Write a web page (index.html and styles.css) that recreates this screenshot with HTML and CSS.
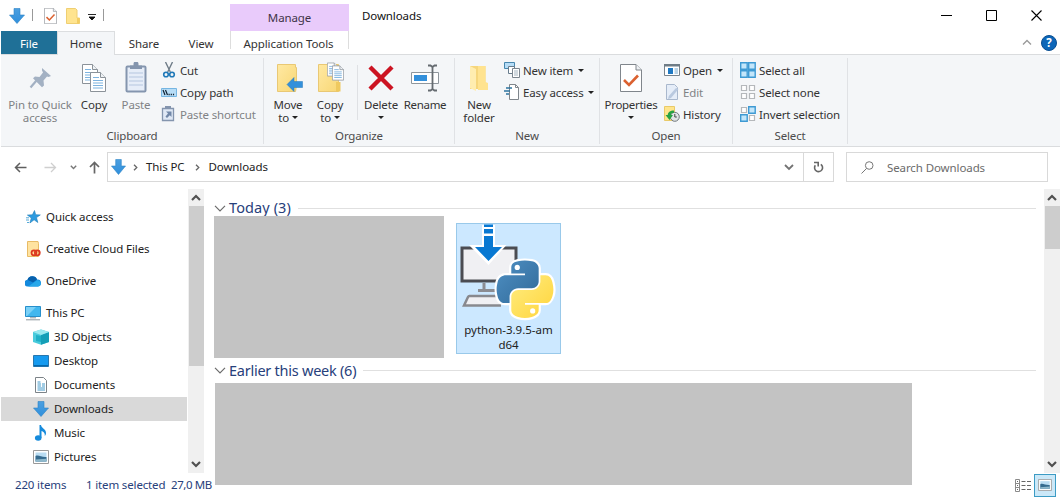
FILE: index.html
```html
<!DOCTYPE html>
<html lang="en">
<head>
<meta charset="utf-8">
<title>Downloads</title>
<link rel="stylesheet" href="styles.css">
</head>
<body>
<svg class="defs" width="0" height="0">
  <defs>
    <linearGradient id="gBlue" x1="0" y1="0" x2="0" y2="1"><stop offset="0" stop-color="#4b9fe0"/><stop offset="1" stop-color="#2f8fdc"/></linearGradient>
    <linearGradient id="gFolder" x1="0" y1="0" x2="1" y2="1"><stop offset="0" stop-color="#ffe9a3"/><stop offset="1" stop-color="#f8d775"/></linearGradient>
    <linearGradient id="gPyB" x1="0" y1="0" x2="1" y2="1"><stop offset="0" stop-color="#4f90c4"/><stop offset="1" stop-color="#306998"/></linearGradient>
    <linearGradient id="gPyY" x1="0" y1="0" x2="1" y2="1"><stop offset="0.2" stop-color="#ffe873"/><stop offset="1" stop-color="#ffd43b"/></linearGradient>
    <symbol id="down" viewBox="0 0 16 16"><path d="M5 .5h6v6.500h4.500L8 15.500.5 7H5z" fill="url(#gBlue)" stroke="#2b83c6" stroke-width=".6"/></symbol>
    <symbol id="sheet" viewBox="0 0 16 20"><path d="M.5.5h10l5 5v14H.5z" fill="#fff" stroke="#8b9299"/><path d="M10.500.5v5h5" fill="#eef2f5" stroke="#8b9299"/><path d="M3 5.500h6M3 8.500h10M3 11h10M3 13.500h10M3 16h10" stroke="#7db3df" stroke-width="1.200"/></symbol>
    <symbol id="photo" viewBox="0 0 16 14"><path d="M.5.5h15v13H.5z" fill="#fff" stroke="#9a9a9a"/><path d="M2.500 2.500h11v9h-11z" fill="#b9dcf2"/><path d="M2.500 6c3-1.500 6 1.500 11 1v4.500h-11z" fill="#356b8f"/><path d="M2.500 9.500l11-.8v2.800h-11z" fill="#8fb9cc"/></symbol>
    <symbol id="up" viewBox="0 0 10 8"><path d="M1 6l4-4 4 4" fill="none" stroke="#505050" stroke-width="2.200"/></symbol>
    <symbol id="check" viewBox="0 0 22 28"><path d="M.5.5h15.500l5.500 5.500v21.500H.5z" fill="#fff" stroke="#80868c"/><path d="M16 .5V6h5.500" fill="#eef1f4" stroke="#80868c"/><path d="M4 16l5 5 9-9.500" fill="none" stroke="#db6130" stroke-width="2.600"/></symbol>
    <symbol id="chev" viewBox="0 0 12 7"><path d="M1 .8l5 5 5-5" fill="none" stroke="#6b6b6b" stroke-width="1.200"/></symbol>
  </defs>
</svg>
<div class="window">
  <header class="top">
    <div class="quickbar">
      <svg class="q-down" width="16" height="16"><use href="#down"/></svg>
      <i class="tick"></i>
      <svg class="q-check" width="13" height="16"><use href="#check"/></svg>
      <svg class="q-folder" width="14" height="16" viewBox="0 0 14 16"><path d="M.5.5h9l1.500 1.500v8h2.500v5.500H.5z" fill="#ffe48f" stroke="#efcf72"/><path d="M11 10h2.500v5.500H11z" fill="#f3cd62"/></svg>
      <svg class="q-more" width="8" height="7" viewBox="0 0 8 7"><path d="M0 .5h8M1 3h6L4 6z" stroke="#111" fill="#111" stroke-width=".9"/></svg>
      <i class="tick"></i>
    </div>
    <div class="manage">Manage</div>
    <div class="title">Downloads</div>
    <div class="controls">
      <svg width="11" height="11" viewBox="0 0 11 11"><path d="M0 5.500h11" stroke="#000"/></svg>
      <svg width="11" height="11" viewBox="0 0 11 11"><path d="M.5.5h10v10H.5z" fill="none" stroke="#000"/></svg>
      <svg width="11" height="11" viewBox="0 0 11 11"><path d="M.5.5l10 10M10.500.5l-10 10" stroke="#000" stroke-width="1.100"/></svg>
    </div>
  </header>
  <nav class="tabs">
    <div class="tab file">File</div>
    <div class="tab home">Home</div>
    <div class="tab share">Share</div>
    <div class="tab view">View</div>
    <div class="tab tools">Application Tools</div>
    <div class="tabs-end">
      <svg width="10" height="7" viewBox="0 0 10 7"><path d="M1 5.500l4-4 4 4" fill="none" stroke="#999" stroke-width="1.300"/></svg>
      <span class="help">?</span>
    </div>
  </nav>
  <section class="ribbon">
    <div class="group clipboard">
      <div class="tools-row">
        <div class="big w-pin off"><svg width="32" height="32" viewBox="0 0 32 32"><g transform="translate(-1 0)"><path d="M19 6l9 8-2.500 1-1.500-.5-3.500 4 .5 5-2 1.800-9-9 2-1.800 4.500.5 3.500-4.500-1-2z" fill="#a3b1c3"/><path d="M13.500 18.500l-6 7" stroke="#a3b1c3" stroke-width="2.200"/></g></svg><span>Pin to Quick<br>access</span></div>
        <div class="big w-copy"><svg width="26" height="32" viewBox="0 0 26 32"><use href="#sheet" x="1" y="2" width="16" height="20"/><use href="#sheet" x="9" y="10" width="16" height="20"/></svg><span>Copy</span></div>
        <div class="big w-paste off"><svg width="22" height="32" viewBox="0 0 22 32"><rect x="1.500" y="4.500" width="19" height="25" rx="1" fill="#e6edf8" stroke="#8495ae" stroke-width="2"/><path d="M5 7V3.500h3.500V2a2.500 2.500 0 015 0v1.500H17V7z" fill="#8495ae"/><path d="M4 11h14M4 15h14M4 19h14M4 23h14" stroke="#b5c6df"/></svg><span>Paste</span></div>
        <div class="smalls">
          <div class="small"><svg viewBox="0 0 16 16"><path d="M4.500 0l4.800 10M11.500 0L6.700 10" stroke="#6f7c88" stroke-width="1.400"/><circle cx="5" cy="12.500" r="2.300" fill="none" stroke="#2079b8" stroke-width="1.600"/><circle cx="11" cy="12.500" r="2.300" fill="none" stroke="#2079b8" stroke-width="1.600"/></svg><span>Cut</span></div>
          <div class="small"><svg viewBox="0 0 16 16"><path d="M.5 4.500h15v8H.5z" fill="#b7ddf7" stroke="#76b6e2"/><path d="M2 6l2 5M4.500 6l2 5" stroke="#123" stroke-width="1.200"/><path d="M7.500 10.500h1.200m1 0h1.200m1 0h1.200" stroke="#123" stroke-width="1.300"/></svg><span>Copy path</span></div>
          <div class="small off"><svg viewBox="0 0 16 16"><path d="M1.500 2.500h11v12h-11z" fill="#dfe8f5" stroke="#8495ae" stroke-width="1.300"/><path d="M4 0h6v3H4z" fill="#8495ae"/><path d="M5 5.500h5.500V11L8.800 9.300 6 12 4.500 10.500l2.500-3z" fill="#7187a8"/></svg><span>Paste shortcut</span></div>
        </div>
      </div>
      <div class="caption">Clipboard</div>
    </div>
    <div class="group organize">
      <div class="tools-row">
        <div class="big w-move"><svg width="30" height="32" viewBox="0 0 30 32"><path d="M4.500 2.500h18v3h1v18l-1 6h-18z" fill="url(#gFolder)" stroke="#e9c874"/><path d="M14 22.500l7-7v4h8.500v6H21v4z" fill="#3390db" stroke="#2277bb" stroke-width=".5"/></svg><span>Move<br>to <i class="dd"></i></span></div>
        <div class="big w-copyto"><svg width="30" height="32" viewBox="0 0 30 32"><path d="M3.500 2.500h20v27h-20z" fill="url(#gFolder)" stroke="#e9c874"/><path d="M21 20h4.500v9.500H21z" fill="#efc95f"/><use href="#sheet" x="12" y="0" width="11" height="15"/><use href="#sheet" x="17" y="3" width="12" height="16"/></svg><span>Copy<br>to <i class="dd"></i></span></div>
        <i class="bar"></i>
        <div class="big w-delete"><svg width="28" height="32" viewBox="0 0 28 32"><path d="M3 5l22 22M25 5L3 27" stroke="#cc1422" stroke-width="4.400"/></svg><span>Delete<br><i class="dd"></i></span></div>
        <div class="big w-rename"><svg width="30" height="32" viewBox="0 0 30 32"><path d="M1.500 10.500h27v11h-27z" fill="#fff" stroke="#8f969c"/><path d="M4 13h13v6H4z" fill="#3390db"/><path d="M18 3.500h2.500l2 1.500 2-1.500H27M18 28.500h2.500l2-1.500 2 1.500H27M22.500 4v24" fill="none" stroke="#656b70" stroke-width="1.800"/></svg><span>Rename</span></div>
      </div>
      <div class="caption">Organize</div>
    </div>
    <div class="group new">
      <div class="tools-row">
        <div class="big w-folder"><svg width="22" height="32" viewBox="0 0 22 32"><path d="M2 4h15.500v23H2z" fill="#f6d67c"/><path d="M10 4h7.500v16l2.500 1v7H10z" fill="#ffe38f"/><path d="M2 4l6 3v22l-6-3z" fill="#ffedb0"/></svg><span>New<br>folder</span></div>
        <div class="smalls">
          <div class="small"><svg viewBox="0 0 16 16"><path d="M.5.5h10v6H.5z" fill="#b7ddf7" stroke="#4787ae"/><path d="M4.500 4.500h6v7h-6z" fill="#fff" stroke="#687c8c"/><path d="M8.500 6.500h7v9h-7z" fill="#fff" stroke="#7c858e"/><path d="M10 9h4M10 11h4M10 13h4" stroke="#a5b4c0"/></svg><span>New item <i class="dd"></i></span></div>
          <div class="small"><svg viewBox="0 0 16 16"><path d="M5.500.5h6l3 3v12h-9z" fill="#fff" stroke="#80868c"/><path d="M11.500.5v3h3" fill="none" stroke="#80868c"/><path d="M2 4h6M0 7h6M2 10h3" stroke="#2d749f" stroke-width="1.500"/></svg><span>Easy access <i class="dd"></i></span></div>
        </div>
      </div>
      <div class="caption">New</div>
    </div>
    <div class="group open">
      <div class="tools-row">
        <div class="big w-props"><svg width="22" height="32" viewBox="0 0 22 32"><use href="#check" y="2" width="22" height="28"/></svg><span>Properties<br><i class="dd"></i></span></div>
        <div class="smalls">
          <div class="small"><svg viewBox="0 0 16 16"><path d="M.5 2.500h15v11H.5z" fill="#fff" stroke="#78838c"/><path d="M0 2h16v2.500H0z" fill="#6f7c86"/><path d="M4 6h5v6H4z" fill="#2079c2"/><path d="M10.500 7h3.500M10.500 9h3.500M10.500 11h3.500" stroke="#77a8cc"/></svg><span>Open <i class="dd"></i></span></div>
          <div class="small off"><svg viewBox="0 0 16 16"><path d="M2.500.5h8l3 3v12h-11z" fill="#e5edf8" stroke="#a9b8cd"/><path d="M14.500 5L7 14l-3 1 .8-3L12 4z" fill="#b9c9df"/></svg><span>Edit</span></div>
          <div class="small"><svg viewBox="0 0 16 16"><path d="M.5.5h10v14H.5z" fill="#ffe58c" stroke="#e9ca68"/><circle cx="10.800" cy="10.800" r="4.500" fill="#dfe3e5" stroke="#72797e"/><path d="M10.800 8v3h2" fill="none" stroke="#444"/><path d="M10 4.500C6 4.500 3.800 6.500 3.800 9H1.500l4 5 3.500-5H7c0-1.500 1-2.200 3-2.200z" fill="#27a243"/></svg><span>History</span></div>
        </div>
      </div>
      <div class="caption">Open</div>
    </div>
    <div class="group select">
      <div class="tools-row">
        <div class="smalls">
          <div class="small"><svg viewBox="0 0 16 16"><path d="M.7.7h6.500v6.500H.7zM8.700.7h6.500v6.500H8.700zM.7 8.700h6.500v6.500H.7zM8.700 8.700h6.500v6.500H8.700z" fill="#c3e6fa" stroke="#3e9ad3" stroke-width="1.400"/></svg><span>Select all</span></div>
          <div class="small"><svg viewBox="0 0 16 16"><path d="M1.500 1.500h5v5h-5zM9.500 1.500h5v5h-5zM1.500 9.500h5v5h-5zM9.500 9.500h5v5h-5z" fill="#fff" stroke="#b5b8bb" stroke-width="1.200"/></svg><span>Select none</span></div>
          <div class="small"><svg viewBox="0 0 16 16"><path d="M1.500 1.500h5v5h-5zM9.500 9.500h5v5h-5z" fill="#fff" stroke="#b5b8bb" stroke-width="1.200"/><path d="M8.700.7h6.500v6.500H8.700zM.7 8.700h6.500v6.500H.7z" fill="#c3e6fa" stroke="#3e9ad3" stroke-width="1.400"/></svg><span>Invert selection</span></div>
        </div>
      </div>
      <div class="caption">Select</div>
    </div>
  </section>
  <section class="address">
    <div class="arrows">
      <svg width="13" height="11" viewBox="0 0 13 11"><path d="M12.500 5.500H1.500M6 1L1.500 5.500 6 10" fill="none" stroke="#5f5f5f" stroke-width="1.500"/></svg>
      <svg width="13" height="11" viewBox="0 0 13 11"><path d="M.5 5.500h11M7 1l4.500 4.500L7 10" fill="none" stroke="#cfcfcf" stroke-width="1.300"/></svg>
      <svg width="7" height="5" viewBox="0 0 7 5"><path d="M.8.8l2.700 2.700L6.200.8" fill="none" stroke="#777" stroke-width="1.400"/></svg>
      <svg width="11" height="13" viewBox="0 0 11 13"><path d="M5.500 12.500v-11M1 6l4.500-4.500L10 6" fill="none" stroke="#666" stroke-width="1.700"/></svg>
    </div>
    <div class="path">
      <svg width="15" height="17" viewBox="0 0 16 17" preserveAspectRatio="none"><use href="#down" width="16" height="16"/></svg>
      <svg class="gt" width="5" height="7" viewBox="0 0 5 7"><path d="M1 .7l2.800 2.800L1 6.300" fill="none" stroke="#666" stroke-width="1.300"/></svg>
      <span class="crumb">This PC</span>
      <svg class="gt2" width="5" height="7" viewBox="0 0 5 7"><path d="M1 .7l2.800 2.800L1 6.300" fill="none" stroke="#666" stroke-width="1.300"/></svg>
      <span class="crumb">Downloads</span>
      <svg class="drop" width="10" height="7" viewBox="0 0 10 7"><path d="M1 1l4 4 4-4" fill="none" stroke="#737373" stroke-width="1.800"/></svg>
      <div class="refresh"><svg width="11" height="12" viewBox="0 0 11 12"><path d="M7.800 3.300A4 4 0 112.300 4.300" fill="none" stroke="#666" stroke-width="1.600"/><path d="M1 1.500h4.200v4" fill="none" stroke="#666" stroke-width="1.600"/></svg></div>
    </div>
    <div class="search"><svg width="13" height="13" viewBox="0 0 13 13"><circle cx="8.200" cy="4.500" r="3.800" fill="none" stroke="#777"/><path d="M5.500 7.500L.5 12.500" stroke="#777"/></svg><span>Search Downloads</span></div>
  </section>
  <main class="panes">
    <aside class="tree">
      <div class="item gap"><svg viewBox="0 0 16 16"><path d="M9.500 1.500l1.200 4.200 4.600.2-3.800 2.700 1.300 4.900-3.700-2.700-4.200 3.200 1.400-5-3.900-2.900 5-.3z" fill="#2c9be0" stroke="#1e7db9" stroke-width=".6"/><path d="M1 8.800h3M1 11h3M2 13.500h2" stroke="#55a9d7"/></svg><span>Quick access</span></div>
      <div class="item gap"><svg viewBox="0 0 16 16"><path d="M2.500.5H13l.5 2v13h-11z" fill="#ffe3a0" stroke="#e8bb66"/><g fill="none" stroke="#dc3a20" stroke-width="1.800"><circle cx="9" cy="11.800" r="2.500"/><circle cx="12.300" cy="11.800" r="2.500"/></g></svg><span>Creative Cloud Files</span></div>
      <div class="item gap"><svg viewBox="0 0 16 16"><path d="M3.200 13.500a3.300 3.300 0 01-.7-6.700A5 5 0 0112 6.500a3.500 3.500 0 011 7z" fill="#1389dd"/><path d="M2.500 6.800A5 5 0 0112 6.500L8 9.500z" fill="#0760ac"/><path d="M3.200 13.500L12 7.300a3.400 3.400 0 013.700 4.200 3 3 0 01-2.700 2z" fill="#28a8ea"/></svg><span>OneDrive</span></div>
      <div class="item"><svg viewBox="0 0 16 16"><path d="M.5 1.500h15v10H.5z" fill="#42b7ef" stroke="#278fcb"/><path d="M1 2h10l-9 9H1z" fill="#7bd1f7"/><path d="M5 12.800h6M1 14.800h14" stroke="#8d989f"/></svg><span>This PC</span></div>
      <div class="item sub"><svg viewBox="0 0 16 16"><path d="M0 3l8-2.500L16 3v10l-8 2.700L0 13z" fill="#49cbdc"/><path d="M8 6l8-3v10l-8 2.700z" fill="#159fb7"/><path d="M0 3l8-2.500L16 3 8 6z" fill="#9be9ef"/><path d="M3 6l5 1v6l-5-1z" fill="#1fb0c7"/></svg><span>3D Objects</span></div>
      <div class="item sub"><svg viewBox="0 0 16 16"><path d="M.5 2.500h15v11H.5z" fill="#169aef" stroke="#2877ae"/><path d="M1 12h14v1.200H1z" fill="#0568ab"/></svg><span>Desktop</span></div>
      <div class="item sub"><svg viewBox="0 0 16 16"><path d="M2.500.5h8l3 3v12h-11z" fill="#fff" stroke="#7c8388"/><path d="M4.500 5h3M4.500 7h3.500M9 7h3M4.500 9h3.500M9 9h3M4.500 11h7.500M4.500 13h7.500" stroke="#4599c9"/></svg><span>Documents</span></div>
      <div class="item sub picked"><svg viewBox="0 0 16 16"><use href="#down" width="16" height="16"/></svg><span>Downloads</span></div>
      <div class="item sub"><svg viewBox="0 0 16 16"><ellipse cx="5.200" cy="13" rx="3.300" ry="2.700" fill="#168bdc"/><path d="M6.500 13V0H8c.5 3.500 5.500 4 5 8.500-.3 1.500-.8 2-1.300 2.500.7-3-1.700-4.500-3.200-5V13z" fill="#168bdc"/></svg><span>Music</span></div>
      <div class="item sub"><svg viewBox="0 0 16 16"><use href="#photo" y="1" width="16" height="14"/></svg><span>Pictures</span></div>
    </aside>
    <div class="scroll left">
      <svg width="10" height="8"><use href="#up"/></svg><div class="thumb"></div><svg class="flip" width="10" height="8"><use href="#up"/></svg>
    </div>
    <div class="files">
      <div class="heading"><svg width="12" height="7"><use href="#chev"/></svg><span class="h-today">Today (3)</span><hr></div>
      <div class="row">
        <div class="blank one"></div>
        <div class="tile">
          <svg width="103" height="98" viewBox="0 0 103 98">
            <path d="M5 24h54v33h-54z" fill="#f0f0f3" stroke="#4b4c52" stroke-width="3"/>
            <path d="M27 59v7M21 66.500h20" stroke="#8b8c92" stroke-width="3"/>
            <path d="M44 72H12.500a2 2 0 00-1.500 1l-4 8.500H44" fill="#f0f0f3" stroke="#88898e" stroke-width="2.500"/>
            <path d="M25 1h13v20h11.500L31.500 41 12 21h13z" fill="#fff"/>
            <path d="M27 .5h9V3h-9zM27 5h9v4.500h-9zM27 12h9v11h9L31.500 37 18 23h9z" fill="#0878d2"/>
            <g transform="translate(32.500 35.500) scale(.555)">
              <g fill="#fff" stroke="#fff" stroke-width="8" stroke-linejoin="round">
                <path d="M63.391 1.988c-4.222.02-8.252.379-11.800 1.007-10.450 1.846-12.346 5.710-12.346 12.837v9.411h24.693v3.137H29.977c-7.176 0-13.460 4.313-15.426 12.521-2.268 9.405-2.368 15.275 0 25.096 1.755 7.311 5.947 12.519 13.124 12.519h8.491V67.234c0-8.151 7.051-15.340 15.426-15.340h24.665c6.866 0 12.346-5.654 12.346-12.548V15.833c0-6.693-5.646-11.720-12.346-12.837-4.244-.706-8.645-1.027-12.866-1.008z"/>
                <path d="M91.682 28.380v10.966c0 8.500-7.208 15.655-15.426 15.655H51.591c-6.756 0-12.346 5.783-12.346 12.549v23.515c0 6.691 5.818 10.628 12.346 12.547 7.816 2.297 15.312 2.713 24.665 0 6.216-1.801 12.346-5.423 12.346-12.547v-9.412H63.938v-3.138h37.012c7.176 0 9.852-5.005 12.348-12.519 2.578-7.735 2.467-15.174 0-25.096-1.774-7.145-5.161-12.521-12.348-12.521z"/>
              </g>
              <path fill="url(#gPyB)" d="M63.391 1.988c-4.222.02-8.252.379-11.800 1.007-10.450 1.846-12.346 5.710-12.346 12.837v9.411h24.693v3.137H29.977c-7.176 0-13.460 4.313-15.426 12.521-2.268 9.405-2.368 15.275 0 25.096 1.755 7.311 5.947 12.519 13.124 12.519h8.491V67.234c0-8.151 7.051-15.340 15.426-15.340h24.665c6.866 0 12.346-5.654 12.346-12.548V15.833c0-6.693-5.646-11.720-12.346-12.837-4.244-.706-8.645-1.027-12.866-1.008z"/>
              <path fill="url(#gPyY)" d="M91.682 28.380v10.966c0 8.500-7.208 15.655-15.426 15.655H51.591c-6.756 0-12.346 5.783-12.346 12.549v23.515c0 6.691 5.818 10.628 12.346 12.547 7.816 2.297 15.312 2.713 24.665 0 6.216-1.801 12.346-5.423 12.346-12.547v-9.412H63.938v-3.138h37.012c7.176 0 9.852-5.005 12.348-12.519 2.578-7.735 2.467-15.174 0-25.096-1.774-7.145-5.161-12.521-12.348-12.521z"/>
              <circle cx="50" cy="14.300" r="4.700" fill="#fff"/><circle cx="77.800" cy="92.600" r="4.700" fill="#fff"/>
            </g>
          </svg>
          <span>python-3.9.5-am<br>d64</span>
        </div>
      </div>
      <div class="heading second"><svg width="12" height="7"><use href="#chev"/></svg><span class="h-week">Earlier this week (6)</span><hr></div>
      <div class="blank two"></div>
    </div>
    <div class="scroll right">
      <svg width="10" height="8"><use href="#up"/></svg><div class="thumb"></div><svg class="flip" width="10" height="8"><use href="#up"/></svg>
    </div>
  </main>
  <footer class="status">
    <span class="count">220 items</span>
    <span class="sel">1 item selected</span>
    <span class="size">27,0 MB</span>
    <div class="modes">
      <svg width="16" height="13" viewBox="0 0 16 13"><path d="M.5.500h4v12h-4zM.5 4.500h4M.5 8.500h4" fill="#fff" stroke="#8a8a8a"/><path d="M2 2.500h1M2 6.500h1M2 10.500h1M6.500 2.500h4M6.500 6.500h4M6.500 10.500h4M12 2.500h4M12 6.500h4M12 10.500h4" stroke="#666"/></svg>
      <div class="mode-on"><svg width="14" height="12"><use href="#photo"/></svg></div>
    </div>
  </footer>
</div>
</body>
</html>
```

FILE: styles.css
```css
* { box-sizing: border-box; }
body { margin: 0; background: #fff; font-family: "Noto Sans", "Open Sans", sans-serif; font-size: 11.5px; letter-spacing: -0.1px; color: #262626; }
svg { display: block; flex: none; }
.defs { position: absolute; }
i { font-style: normal; }
.window { width: 1061px; height: 497px; overflow: hidden; display: flex; flex-direction: column; white-space: nowrap; }

.top { height: 31px; display: flex; flex: none; }
.quickbar { width: 230px; padding-left: 9px; display: flex; align-items: center; }
.quickbar svg { margin-top: 1px; }
.tick { width: 1px; height: 12px; background: #999; margin-bottom: 1px; }
.q-down { margin-right: 7px; }
.q-check { margin-left: 11px; }
.q-folder { margin-left: 9px; }
.q-more { margin: 0 7px 0 8px; }
.quickbar .q-more { margin-top: 3px; }
.manage { width: 119px; margin-top: 4px; background: #e9cbfb; display: flex; justify-content: center; align-items: center; color: #403448; }
.title { margin-left: 13px; line-height: 32px; color: #111; }
.controls { margin-left: auto; padding: 10px 19px 0 0; display: flex; gap: 34px; }

.tabs { height: 23px; display: flex; flex: none; padding-left: 1px; color: #333; }
.tab { display: flex; justify-content: center; align-items: center; padding-top: 1px; }
.file { width: 56px; background: #1f7097; color: #fff; }
.home { width: 58px; background: #f4f6f8; border: 1px solid #dcdee0; border-bottom: 0; height: 24px; z-index: 1; padding-top: 0; }
.share { width: 58px; }
.view { width: 56px; }
.tools { width: 119px; margin-left: 1px; height: 18px; border: solid #ddd; border-width: 0 1px; padding: 6px 2px 0 0; }
.tabs-end { margin-left: auto; display: flex; align-items: center; gap: 9px; padding-right: 4px; }
.help { width: 16px; height: 16px; border-radius: 50%; background: #0c66b8; border: 1px solid #0a4e91; color: #fff; font-weight: 700; line-height: 14px; text-align: center; }

.ribbon { height: 93px; flex: none; margin: 0 1px; background: #f4f6f8; border: solid #dadcde; border-width: 1px 0; display: flex; padding: 3px 0 2px; letter-spacing: -0.15px; color: #333; }
.group { border-right: 1px solid #e0e2e5; display: flex; flex-direction: column; }
.clipboard { width: 263px; }
.organize { width: 191px; }
.new { width: 145px; }
.open { width: 133px; }
.select { width: 115px; }
.tools-row { display: flex; height: 71px; }
.caption { text-align: center; line-height: 16px; padding-top: 1px; color: #4c4c4c; }
.big { padding-top: 4px; display: flex; flex-direction: column; align-items: center; text-align: center; line-height: 13px; }
.big span { margin-top: 4px; }
.off { color: #808285; }
.smalls { padding-top: 1px; }
.small { display: flex; align-items: center; height: 22px; gap: 3px; }
.small svg { width: 16px; height: 16px; }
.dd { display: inline-block; border: 3px solid transparent; border-top-color: #222; border-bottom: 0; margin-left: 2px; vertical-align: 3px; }
.big .dd { margin-left: 0; }
.w-pin { width: 70px; margin-left: 4px; letter-spacing: -0.1px; }
.w-copy { width: 38px; }
.w-paste { width: 46px; margin-right: 2px; }
.w-move { width: 42px; margin-left: 3px; }
.w-copyto { width: 42px; }
.bar { width: 1px; height: 55px; margin: 7px 0 0 6px; background: #dfe1e4; }
.w-delete { width: 44px; margin-left: 1px; }
.w-rename { width: 44px; letter-spacing: -0.3px; }
.w-folder { width: 44px; margin: 0 3px 0 2px; }
.w-props { width: 60px; margin: 0 3px 0 1px; letter-spacing: -0.3px; }
.select .smalls { padding-left: 7px; }

.address { height: 42px; flex: none; display: flex; padding: 5px 13px 7px 0; }
.arrows { width: 107px; padding-left: 14px; display: flex; align-items: center; }
.arrows svg:nth-child(2) { margin-left: 17px; }
.arrows svg:nth-child(3) { margin-left: 13px; }
.arrows svg:nth-child(4) { margin-left: 12px; }
.path { width: 727px; border: 1px solid #d9d9d9; display: flex; align-items: center; padding-left: 3px; color: #222; }
.crumb { margin-top: -1px; }
.gt { margin: 0 8px 0 7px; }
.gt2 { margin: 0 9px 0 10px; }
.drop { margin-left: auto; }
.refresh { margin-left: 9px; width: 30px; height: 28px; border-left: 1px solid #d9d9d9; display: flex; align-items: center; justify-content: center; }
.search { width: 202px; margin-left: 12px; border: 1px solid #d9d9d9; display: flex; align-items: center; padding-left: 14px; gap: 13px; color: #6b6b6b; }

.panes { height: 284px; flex: none; display: flex; }
.tree { width: 188px; padding: 16px 1px 0; }
.item { height: 24px; display: flex; align-items: center; padding-left: 24px; gap: 5px; color: #222; }
.item span { margin-top: -1px; }
.item svg { width: 16px; height: 16px; }
.gap { margin-bottom: 8px; }
.sub { padding-left: 32px; }
.picked { background: #d9d9d9; }
.scroll { width: 16px; background: #f0f0f0; display: flex; flex-direction: column; align-items: center; padding: 5px 0; }
.thumb { width: 15px; background: #cdcdcd; margin-top: 4px; }
.left .thumb { height: 160px; }
.right .thumb { height: 43px; }
.flip { transform: scaleY(-1); margin-top: auto; }
.files { width: 840px; padding: 11px 8px 0 10px; }
.heading { height: 16px; display: flex; align-items: center; color: #27407b; font-size: 14.5px; gap: 3px; letter-spacing: -0.25px; }
.heading span { margin-top: -2px; }
.h-today { letter-spacing: 0.1px; }
.heading hr { flex: 1; border: 0; border-top: 1px solid #e0e0e0; margin: 0 0 0 4px; }
.second { height: 25px; }
.row { display: flex; gap: 12px; height: 142px; }
.blank { background: #c3c3c3; }
.one { width: 230px; }
.two { width: 697px; height: 102px; margin-left: 1px; }
.tile { width: 105px; height: 131px; margin-top: 7px; background: #cce8ff; border: 1px solid #99c9ea; text-align: center; line-height: 15px; color: #222; letter-spacing: 0; }

.status { height: 24px; display: flex; align-items: center; padding-left: 15px; color: #27407b; letter-spacing: -0.15px; }
.status span { margin-top: -1px; }
.count { width: 71px; }
.sel { width: 85px; }
.size { letter-spacing: -0.4px; }
.modes { margin-left: auto; display: flex; align-items: center; gap: 3px; padding-right: 5px; }
.mode-on { width: 22px; height: 23px; background: #cbe8f8; border: 1px solid #3c9bc4; display: flex; align-items: center; justify-content: center; }
```
